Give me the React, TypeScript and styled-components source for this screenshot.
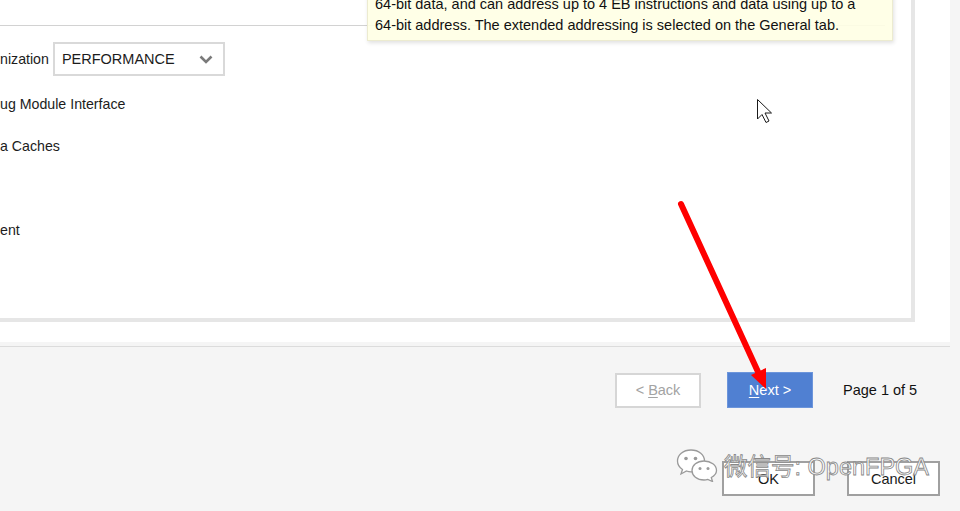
import React from "react";
import styled, {createGlobalStyle} from "styled-components";

const GlobalStyle = createGlobalStyle`
	html, body {
		margin: 0;
		padding: 0;
		background: #f5f5f5;
	}
	body {
		font-family: "Liberation Sans", Arial, sans-serif;
		font-size: 14.5px;
		color: #1c1c1c;
	}
`;

const Page = styled.div`
	position: relative;
	width: 960px;
	height: 511px;
	overflow: hidden;
	display: flex;
	flex-direction: column;
	background: #f5f5f5;
`;

const Upper = styled.div`
	width: 950px;
	height: 342px;
	background: #ffffff;
	flex-shrink: 0;
`;

const Panel = styled.div`
	position: relative;
	width: 911px;
	height: 318px;
	background: #ffffff;
	border-right: 4px solid #e6e6e6;
	border-bottom: 4px solid #e6e6e6;
`;

const Header = styled.div`
	width: 885px;
	height: 25px;
	border-bottom: 1px solid #d2d2d2;
`;

const Form = styled.div`
	display: flex;
	flex-direction: column;
	padding-top: 16px;
`;

const FirstRow = styled.div`
	display: flex;
	align-items: center;
	gap: 4px;
	height: 34px;
	margin-bottom: 7px;
`;

const Row = styled.div`
	display: flex;
	align-items: center;
	height: 42px;
	white-space: nowrap;
	font-size: 14.2px;
`;

const Label = styled.span`
	white-space: nowrap;
	font-size: 14.2px;
`;

const Select = styled.div`
	box-sizing: border-box;
	width: 172px;
	height: 34px;
	border: 2px solid #d9d9d9;
	background: #fff;
	display: flex;
	align-items: center;
	justify-content: space-between;
	padding: 0 10px 0 7px;
`;

const Tooltip = styled.div`
	position: absolute;
	left: 367px;
	top: -7px;
	width: 526px;
	box-sizing: border-box;
	padding: 0 8px 4px 7px;
	background: rgba(255, 255, 228, 0.9);
	border: 1px solid #ecebd0;
	box-shadow: 1px 2px 4px rgba(0, 0, 0, 0.12);
	line-height: 21px;
	color: #111;
	white-space: nowrap;
`;

const Footer = styled.div`
	flex: 1;
	padding-top: 4px;
`;

const FooterLine = styled.div`
	width: 950px;
	border-top: 1px solid #dcdcdc;
`;

const NavRow = styled.div`
	display: flex;
	align-items: center;
	padding: 25px 0 0 615px;
`;

const Button = styled.div<{primary?: boolean; dim?: boolean; dark?: boolean}>`
	box-sizing: border-box;
	width: ${({dark}) => (dark ? "93px" : "86px")};
	height: ${({primary}) => (primary ? "36px" : "35px")};
	display: flex;
	align-items: center;
	justify-content: center;
	background: ${({primary}) => (primary ? "#5080d2" : "#ffffff")};
	border: ${({primary, dark}) =>
		primary ? "1px solid #6c95db" : dark ? "2px solid #a0a0a0" : "2px solid #d6d6d6"};
	color: ${({primary, dim}) => (primary ? "#ffffff" : dim ? "#a3a3a3" : "#1a1a1a")};
	user-select: none;

	u {
		text-decoration: underline;
		text-underline-offset: 2px;
	}
`;

const PageInfo = styled.span`
	margin-left: 30px;
	color: #111;
`;

const ActionRow = styled.div`
	display: flex;
	gap: 32px;
	padding: 53px 0 0 722px;
`;

const Overlay = styled.svg`
	position: absolute;
	left: 0;
	top: 0;
	pointer-events: none;
`;

const Watermark = styled.div`
	position: absolute;
	left: 676px;
	top: 448px;
	display: flex;
	align-items: center;
	gap: 6px;
	pointer-events: none;
`;

const WatermarkText = styled.span`
	font-family: "Liberation Sans", "Noto Sans CJK SC", sans-serif;
	font-size: 23.5px;
	color: rgba(255, 255, 255, 0.9);
	-webkit-text-stroke: 0.8px #888888;
	white-space: nowrap;
`;

const Chevron = () => (
	<svg width="14" height="9" viewBox="0 0 14 9">
		<path d="M1.5 1.5 L7 7 L12.5 1.5" fill="none" stroke="#7a7a7a" strokeWidth="2.6" />
	</svg>
);

const WeChatLogo = () => (
	<svg width="42" height="34" viewBox="0 0 42 34">
		<path
			d="M15 2 C7 2 1.5 7 1.5 13 C1.5 16.5 3.5 19.5 6.5 21.5 L5 26 L10.5 23 C12 23.5 13.5 23.8 15 23.8 C23 23.8 28.5 18.8 28.5 13 C28.5 7 23 2 15 2 Z"
			fill="#fff"
			stroke="#9a9a9a"
			strokeWidth="1.3"
		/>
		<circle cx="10" cy="10.5" r="1.8" fill="#9a9a9a" />
		<circle cx="19.5" cy="10.5" r="1.8" fill="#9a9a9a" />
		<path
			d="M28 13 C21 13 16 17.3 16 22.5 C16 27.7 21 32 28 32 C29.3 32 30.6 31.8 31.8 31.4 L36.5 33.5 L35.3 29.5 C38.5 27.7 40.5 25.2 40.5 22.5 C40.5 17.3 35 13 28 13 Z"
			fill="#fff"
			stroke="#9a9a9a"
			strokeWidth="1.3"
		/>
		<circle cx="24" cy="20.5" r="1.5" fill="#9a9a9a" />
		<circle cx="32" cy="20.5" r="1.5" fill="#9a9a9a" />
	</svg>
);

export default function App() {
	return (
		<>
			<GlobalStyle />
			<Page>
				<Upper>
					<Panel>
						<Header />
						<Form>
							<FirstRow>
								<Label>nization</Label>
								<Select>
									<span>PERFORMANCE</span>
									<Chevron />
								</Select>
							</FirstRow>
							<Row>ug Module Interface</Row>
							<Row>a Caches</Row>
							<Row />
							<Row>ent</Row>
						</Form>
						<Tooltip>
							<div>
								64-bit data, and can address up to 4 EB instructions and data using up to a
							</div>
							<div>64-bit address. The extended addressing is selected on the General tab.</div>
						</Tooltip>
					</Panel>
				</Upper>
				<Footer>
					<FooterLine />
					<NavRow>
						<Button dim>
							&lt;&nbsp;<u>B</u>ack
						</Button>
						<Button primary style={{marginLeft: 26}}>
							<u>N</u>ext &gt;
						</Button>
						<PageInfo>Page 1 of 5</PageInfo>
					</NavRow>
					<ActionRow>
						<Button dark>OK</Button>
						<Button dark>Cancel</Button>
					</ActionRow>
				</Footer>

				<Watermark>
					<WeChatLogo />
					<WatermarkText>微信号: OpenFPGA</WatermarkText>
				</Watermark>

				<Overlay width="960" height="511" viewBox="0 0 960 511">
					<line
						x1="681"
						y1="204"
						x2="759"
						y2="374"
						stroke="#ff0000"
						strokeWidth="6"
						strokeLinecap="round"
					/>
					<polygon points="766,389 751,375 766,368" fill="#ff0000" />
					<path
						d="M757.5 99.5 L757.5 119 L762 114.5 L766 122.5 L769 121 L765 113 L771.5 113 Z"
						fill="#ffffff"
						stroke="#1a1a1a"
						strokeWidth="1"
						strokeLinejoin="miter"
					/>
				</Overlay>
			</Page>
		</>
	);
}
